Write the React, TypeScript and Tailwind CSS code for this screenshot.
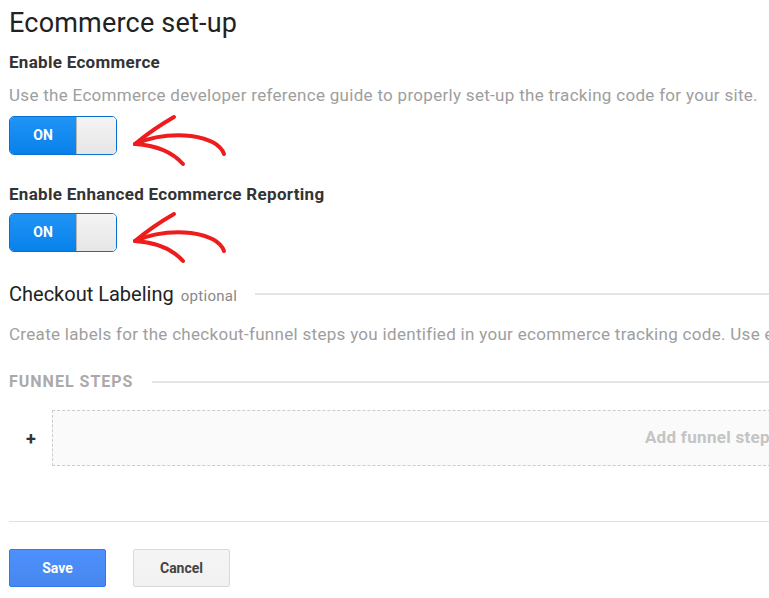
import React from 'react';

// red hand-drawn annotation arrow
const Arrow = () => (
  <svg width="100" height="60" viewBox="0 0 100 60">
    <g fill="none" stroke="#ee1c1c" strokeWidth="4" strokeLinecap="round" strokeLinejoin="round">
      <path d="M43 5 Q22 17 4 32" />
      <path d="M4 32 Q30 21 60 24 Q88 28 93 42" />
      <path d="M4 32 Q36 34 52 52" />
    </g>
  </svg>
);

const Toggle = () => (
  <div className="relative w-[108px]">
    <div className="flex h-[39px] w-[108px] overflow-hidden rounded-[5px] border border-[#0a6fcf]">
      <div className="flex w-[66px] items-center justify-center bg-gradient-to-b from-[#1e94f6] to-[#0781ea] text-[14px] font-bold text-white">
        ON
      </div>
      <div className="flex-1 border-l border-[#b5b5b5] bg-gradient-to-b from-[#f4f4f4] to-[#e6e6e6]" />
    </div>
    <div className="absolute left-[122px] top-[-4px]">
      <Arrow />
    </div>
  </div>
);

export default function App() {
  return (
    <div className="h-[598px] w-[769px] overflow-hidden bg-white font-['Roboto',sans-serif]">
      <div className="w-[800px] px-[9px] pt-[5px]">
        <h1 className="text-[27px] leading-[36px] tracking-[0.2px] text-[#222]">Ecommerce set-up</h1>

        <h2 className="mt-[11px] text-[17px] font-bold leading-[20px] tracking-[0.3px] text-[#333]">
          Enable Ecommerce
        </h2>
        <p className="mt-[13px] text-[17px] leading-[20px] tracking-[0.3px] text-[#9e9e9e]">
          Use the Ecommerce developer reference guide to properly set-up the tracking code for your site.
        </p>
        <div className="mt-[11px]">
          <Toggle />
        </div>

        <h2 className="mt-[29px] text-[17px] font-bold leading-[20px] tracking-[0.3px] text-[#333]">
          Enable Enhanced Ecommerce Reporting
        </h2>
        <div className="mt-[9px]">
          <Toggle />
        </div>

        <div className="mt-[28px] flex h-[28px] items-center gap-[18px]">
          <div className="whitespace-nowrap">
            <span className="text-[20px] text-[#222]">Checkout Labeling</span>
            <span className="ml-[7px] text-[15px] tracking-[0.3px] text-[#888]">optional</span>
          </div>
          <div className="h-[2px] flex-1 bg-[#e5e5e5]" />
        </div>

        <p className="mt-[16px] whitespace-nowrap text-[17px] leading-[20px] tracking-[0.3px] text-[#9e9e9e]">
          Create labels for the checkout-funnel steps you identified in your ecommerce tracking code. Use each label to describe the step.
        </p>

        <div className="mt-[28px] flex h-[20px] items-center gap-[19px]">
          <span className="text-[16px] font-bold tracking-[1px] text-[#aaa]">FUNNEL STEPS</span>
          <div className="h-[2px] flex-1 bg-[#e5e5e5]" />
        </div>

        <div className="mt-[18px] flex items-center">
          <span className="w-[43px] pl-[17px] text-[18px] font-bold text-[#333]">+</span>
          <div className="flex h-[56px] flex-1 items-center justify-end border border-dashed border-[#ccc] bg-[#fafafa] pr-[11px]">
            <span className="text-[17px] font-bold tracking-[0.3px] text-[#c4c4c4]">Add funnel steps</span>
          </div>
        </div>

        <div className="mt-[55px] h-[1px] bg-[#e0e0e0]" />

        <div className="mt-[27px] flex gap-[27px]">
          <button className="h-[38px] w-[97px] rounded-[2px] border border-[#3079ed] bg-gradient-to-b from-[#4d90fe] to-[#4787ed] text-[14px] font-bold text-white">
            Save
          </button>
          <button className="h-[38px] w-[97px] rounded-[2px] border border-[#d9d9d9] bg-gradient-to-b from-[#f5f5f5] to-[#f1f1f1] text-[14px] font-bold text-[#444]">
            Cancel
          </button>
        </div>
      </div>
    </div>
  );
}
